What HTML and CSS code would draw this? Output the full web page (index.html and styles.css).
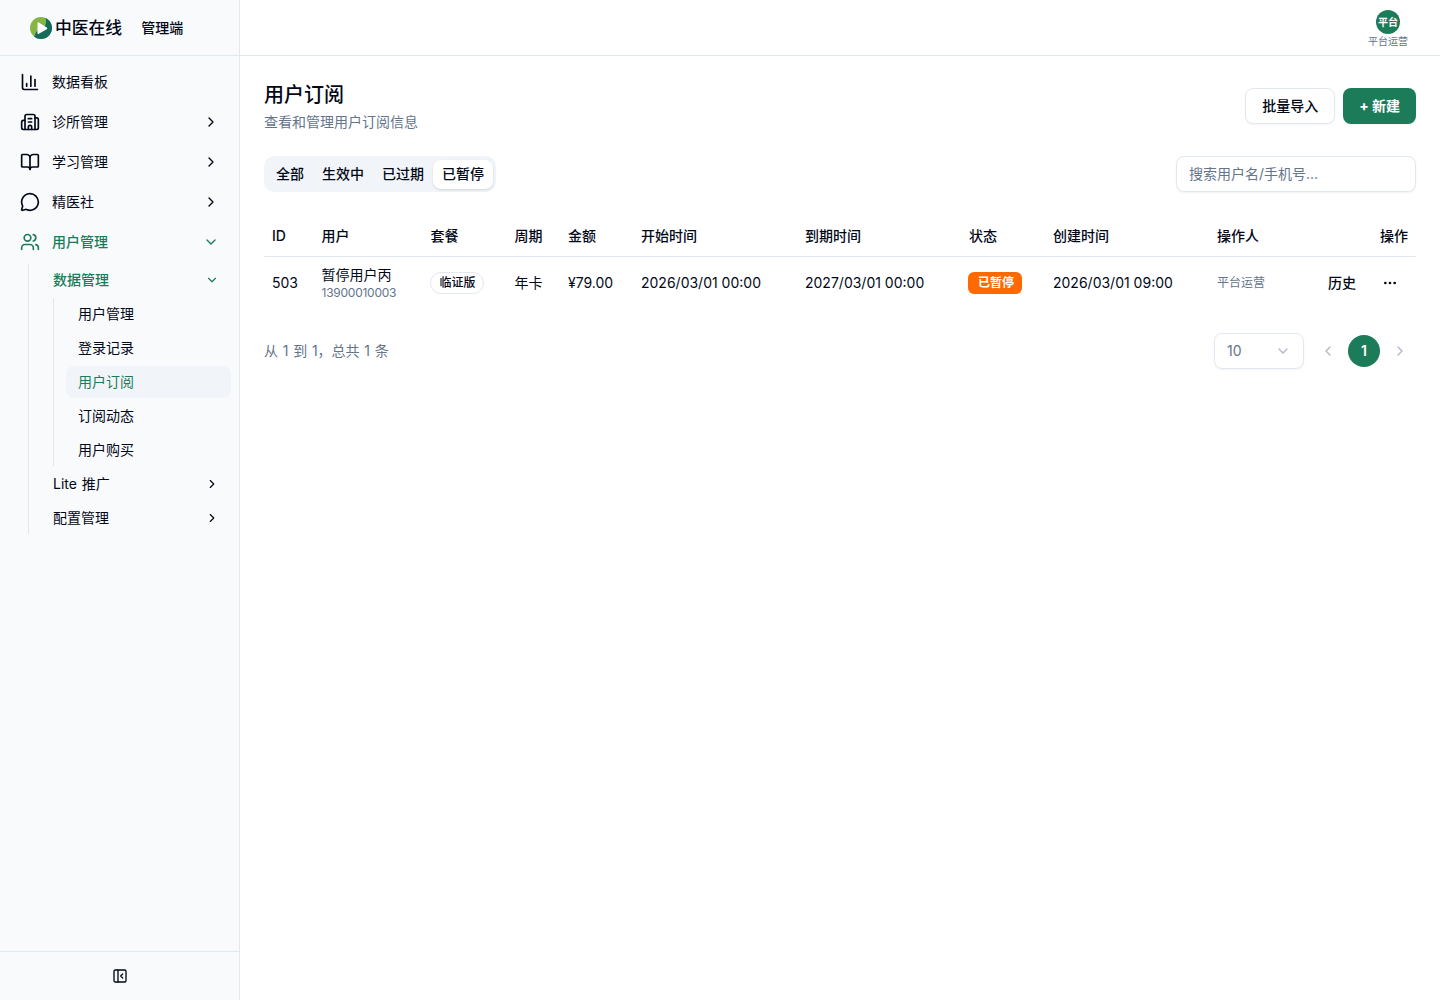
FILE: index.html
```html
<!DOCTYPE html>
<html lang="zh-CN">
<head>
  <meta charset="UTF-8">
  <title>用户订阅 - 中医在线管理端</title>
  <link rel="stylesheet" href="styles.css">
</head>
<body>
  <div class="layout">
    <aside class="sidebar">
      <div class="brand">
        <svg class="logo" viewBox="0 0 24 24">
          <circle cx="12" cy="12" r="11" fill="#86b545"/>
          <path d="M16.500 1.960A11 11 0 1 1 5 20.480Q6.500 19 7 16L16 10Q18 6 16.500 1.960Z" fill="#136b5b"/>
          <path d="M8.500 7.200v9.800q0 1.400 1.300.8l8-4.600q1.200-.8 0-1.600l-8-5Q8.500 5.900 8.500 7.200z" fill="#fff"/>
        </svg>
        <span class="brand-name">中医在线</span>
        <span class="brand-sub">管理端</span>
      </div>

      <nav class="menu">
        <a class="item">
          <svg class="icon" viewBox="0 0 24 24"><path d="M3 3v16a2 2 0 0 0 2 2h16"/><path d="M18 17V9"/><path d="M13 17V5"/><path d="M8 17v-3"/></svg>
          <span>数据看板</span>
        </a>
        <a class="item">
          <svg class="icon" viewBox="0 0 24 24"><path d="M10 12h4"/><path d="M10 8h4"/><path d="M14 21v-3a2 2 0 0 0-4 0v3"/><path d="M6 10H4a2 2 0 0 0-2 2v7a2 2 0 0 0 2 2h16a2 2 0 0 0 2-2V9a2 2 0 0 0-2-2h-2"/><path d="M6 21V5a2 2 0 0 1 2-2h8a2 2 0 0 1 2 2v16"/></svg>
          <span>诊所管理</span>
          <svg class="arrow" viewBox="0 0 24 24"><path d="m9 18 6-6-6-6"/></svg>
        </a>
        <a class="item">
          <svg class="icon" viewBox="0 0 24 24"><path d="M12 7v14"/><path d="M3 18a1 1 0 0 1-1-1V4a1 1 0 0 1 1-1h5a4 4 0 0 1 4 4 4 4 0 0 1 4-4h5a1 1 0 0 1 1 1v13a1 1 0 0 1-1 1h-6a3 3 0 0 0-3 3 3 3 0 0 0-3-3z"/></svg>
          <span>学习管理</span>
          <svg class="arrow" viewBox="0 0 24 24"><path d="m9 18 6-6-6-6"/></svg>
        </a>
        <a class="item">
          <svg class="icon" viewBox="0 0 24 24"><path d="M2.992 16.342a2 2 0 0 1 .094 1.167l-1.065 3.290a1 1 0 0 0 1.236 1.168l3.413-.998a2 2 0 0 1 1.099.092 10 10 0 1 0-4.777-4.719"/></svg>
          <span>精医社</span>
          <svg class="arrow" viewBox="0 0 24 24"><path d="m9 18 6-6-6-6"/></svg>
        </a>
        <a class="item open">
          <svg class="icon" viewBox="0 0 24 24"><path d="M16 21v-2a4 4 0 0 0-4-4H6a4 4 0 0 0-4 4v2"/><path d="M16 3.128a4 4 0 0 1 0 7.744"/><path d="M22 21v-2a4 4 0 0 0-3-3.870"/><circle cx="9" cy="7" r="4"/></svg>
          <span>用户管理</span>
          <svg class="arrow" viewBox="0 0 24 24"><path d="m6 9 6 6 6-6"/></svg>
        </a>
        <div class="submenu">
          <a class="subitem open">
            <span>数据管理</span>
            <svg class="arrow" viewBox="0 0 24 24"><path d="m6 9 6 6 6-6"/></svg>
          </a>
          <div class="leafs">
            <a class="leaf">用户管理</a>
            <a class="leaf">登录记录</a>
            <a class="leaf active">用户订阅</a>
            <a class="leaf">订阅动态</a>
            <a class="leaf">用户购买</a>
          </div>
          <a class="subitem">
            <span>Lite 推广</span>
            <svg class="arrow" viewBox="0 0 24 24"><path d="m9 18 6-6-6-6"/></svg>
          </a>
          <a class="subitem">
            <span>配置管理</span>
            <svg class="arrow" viewBox="0 0 24 24"><path d="m9 18 6-6-6-6"/></svg>
          </a>
        </div>
      </nav>

      <div class="sidebar-footer">
        <svg class="collapse" viewBox="0 0 24 24"><rect width="18" height="18" x="3" y="3" rx="2"/><path d="M9 3v18"/><path d="m16 15-3-3 3-3"/></svg>
      </div>
    </aside>

    <div class="main">
      <header class="topbar">
        <div class="account">
          <span class="avatar">平台</span>
          <span class="account-name">平台运营</span>
        </div>
      </header>

      <main class="content">
        <div class="page-head">
          <div>
            <h1>用户订阅</h1>
            <p class="desc">查看和管理用户订阅信息</p>
          </div>
          <div class="actions">
            <button class="btn">批量导入</button>
            <button class="btn btn-primary">+ 新建</button>
          </div>
        </div>

        <div class="filters">
          <div class="tabs">
            <button class="tab">全部</button>
            <button class="tab">生效中</button>
            <button class="tab">已过期</button>
            <button class="tab active">已暂停</button>
          </div>
          <input class="search" type="text" placeholder="搜索用户名/手机号...">
        </div>

        <table class="table">
          <colgroup>
            <col class="c-id"><col class="c-user"><col class="c-plan"><col class="c-cycle"><col class="c-price">
            <col class="c-time"><col class="c-time"><col class="c-status"><col class="c-time"><col class="c-by"><col>
          </colgroup>
          <thead>
            <tr>
              <th>ID</th>
              <th>用户</th>
              <th>套餐</th>
              <th>周期</th>
              <th>金额</th>
              <th>开始时间</th>
              <th>到期时间</th>
              <th>状态</th>
              <th>创建时间</th>
              <th>操作人</th>
              <th class="right">操作</th>
            </tr>
          </thead>
          <tbody>
            <tr>
              <td>503</td>
              <td>
                <div class="user-name">暂停用户丙</div>
                <div class="user-phone">13900010003</div>
              </td>
              <td><span class="badge">临证版</span></td>
              <td>年卡</td>
              <td>¥79.00</td>
              <td>2026/03/01 00:00</td>
              <td>2027/03/01 00:00</td>
              <td><span class="badge badge-paused">已暂停</span></td>
              <td>2026/03/01 09:00</td>
              <td class="operator">平台运营</td>
              <td>
                <div class="row-actions">
                  <span class="history">历史</span>
                  <svg class="more" viewBox="0 0 24 24"><circle cx="12" cy="12" r="1"/><circle cx="19" cy="12" r="1"/><circle cx="5" cy="12" r="1"/></svg>
                </div>
              </td>
            </tr>
          </tbody>
        </table>

        <div class="table-foot">
          <span class="total">从 1 到 1，总共 1 条</span>
          <div class="pager">
            <div class="page-size">
              <span>10</span>
              <svg class="arrow" viewBox="0 0 24 24"><path d="m6 9 6 6 6-6"/></svg>
            </div>
            <div class="pages">
              <span class="page disabled"><svg class="arrow" viewBox="0 0 24 24"><path d="m15 18-6-6 6-6"/></svg></span>
              <span class="page current">1</span>
              <span class="page disabled"><svg class="arrow" viewBox="0 0 24 24"><path d="m9 18 6-6-6-6"/></svg></span>
            </div>
          </div>
        </div>
      </main>
    </div>
  </div>
</body>
</html>
```
FILE: styles.css
```css
* {
  box-sizing: border-box;
}
body {
  margin: 0;
  font-family: Inter, "Noto Sans CJK SC", sans-serif;
  font-size: 14px;
  line-height: 20px;
  color: #020817;
  background: #fff;
}
button, input {
  font: inherit;
  color: inherit;
}
svg {
  flex-shrink: 0;
  fill: none;
  stroke: currentColor;
  stroke-width: 2;
  stroke-linecap: round;
  stroke-linejoin: round;
}
.layout {
  display: flex;
  height: 100vh;
}

/* sidebar */
.sidebar {
  display: flex;
  flex-direction: column;
  width: 240px;
  background: #f9fafc;
  border-right: 1px solid #e2e8f0;
}
.brand {
  display: flex;
  align-items: center;
  height: 56px;
  padding-left: 29px;
  border-bottom: 1px solid #e2e8f0;
}
.logo {
  width: 24px;
  height: 24px;
  stroke: none;
}
.brand-name {
  margin-left: 2px;
  font-size: 16.8px;
  font-weight: 500;
}
.brand-sub {
  margin-left: 19px;
  font-weight: 500;
}
.menu {
  flex: 1;
  padding: 8px;
}
.item {
  display: flex;
  align-items: center;
  gap: 12px;
  height: 36px;
  margin-bottom: 4px;
  padding: 0 12px;
}
.icon {
  width: 20px;
  height: 20px;
}
.arrow {
  width: 16px;
  height: 16px;
}
.item .arrow,
.subitem .arrow {
  margin-left: auto;
}
.open {
  color: #1c7c5a;
  font-weight: 500;
}
.submenu {
  margin-left: 20px;
  padding-left: 12px;
  border-left: 1px solid #e2e8f0;
}
.subitem {
  display: flex;
  align-items: center;
  height: 32px;
  margin-bottom: 2px;
  padding: 0 12px;
  word-spacing: 1px;
}
.subitem .arrow {
  width: 14px;
  height: 14px;
}
.leafs {
  margin: 0 0 2px 12px;
  padding-left: 12px;
  border-left: 1px solid #e2e8f0;
}
.leaf {
  display: block;
  height: 32px;
  margin-bottom: 2px;
  padding: 6px 12px;
  border-radius: 8px;
}
.leaf.active {
  color: #1c7c5a;
  background: #f1f5f9;
}
.sidebar-footer {
  display: flex;
  align-items: center;
  justify-content: center;
  height: 49px;
  border-top: 1px solid #e2e8f0;
}
.collapse {
  width: 16px;
  height: 16px;
}

/* top bar */
.main {
  flex: 1;
}
.topbar {
  display: flex;
  align-items: center;
  justify-content: flex-end;
  height: 56px;
  padding: 1px 32px 0;
  border-bottom: 1px solid #e2e8f0;
}
.account {
  display: flex;
  flex-direction: column;
  align-items: center;
  gap: 2px;
}
.avatar {
  width: 24px;
  height: 24px;
  border-radius: 50%;
  background: #1c7c5a;
  color: #fff;
  font-size: 10px;
  font-weight: 700;
  line-height: 24px;
  text-align: center;
}
.account-name {
  color: #64748b;
  font-size: 10px;
  line-height: 11px;
}

/* page */
.content {
  padding: 24px;
}
.page-head {
  display: flex;
  align-items: center;
  justify-content: space-between;
  margin-bottom: 24px;
}
h1 {
  margin: 0;
  font-size: 20px;
  font-weight: 500;
  line-height: 30px;
}
.desc {
  margin: 2px 0 0;
  color: #64748b;
}
.actions {
  display: flex;
  gap: 8px;
}
.btn {
  height: 36px;
  padding: 0 16px;
  border: 1px solid #e2e8f0;
  border-radius: 8px;
  background: #fff;
  font-weight: 500;
  box-shadow: 0 1px 2px rgba(0, 0, 0, 0.05);
}
.btn-primary {
  border: 0;
  background: #1c7c5a;
  color: #fff;
  font-weight: 700;
}
.filters {
  display: flex;
  justify-content: space-between;
  margin-bottom: 24px;
}
.tabs {
  display: flex;
  align-items: center;
  height: 36px;
  padding: 3px;
  border-radius: 10px;
  background: #f1f5f9;
}
.tab {
  height: 29px;
  padding: 0 9px;
  border: 0;
  border-radius: 8px;
  background: none;
  font-weight: 500;
}
.tab.active {
  background: #fff;
  box-shadow: 0 1px 3px rgba(0, 0, 0, 0.1), 0 1px 2px -1px rgba(0, 0, 0, 0.1);
}
.search {
  width: 240px;
  height: 36px;
  padding: 0 12px 2px;
  border: 1px solid #e2e8f0;
  border-radius: 8px;
  box-shadow: 0 1px 2px rgba(0, 0, 0, 0.05);
}
.search::placeholder {
  color: #64748b;
}

/* table */
.table {
  width: 100%;
  table-layout: fixed;
  border-collapse: collapse;
}
.c-id { width: 49.500px; }
.c-user { width: 109px; }
.c-plan { width: 84px; }
.c-cycle { width: 53.500px; }
.c-price { width: 73px; }
.c-time { width: 164px; }
.c-status { width: 84px; }
.c-by { width: 101px; }
th, td {
  padding: 8px;
  text-align: left;
  vertical-align: middle;
  white-space: nowrap;
}
th {
  height: 40px;
  padding: 0 8px;
  border-bottom: 1px solid #e2e8f0;
  font-weight: 500;
}
.right {
  text-align: right;
}
.user-phone {
  color: #64748b;
  font-size: 12px;
  line-height: 16px;
  letter-spacing: -0.25px;
}
.badge {
  display: inline-block;
  margin-left: -1px;
  padding: 2px 7px 2px 9px;
  border: 1px solid #e2e8f0;
  border-radius: 11px;
  font-size: 12px;
  font-weight: 500;
  line-height: 16px;
}
.badge-paused {
  padding: 3px 8px 3px 10px;
  border: 0;
  border-radius: 6px;
  background: #ff6900;
  color: #fff;
  font-weight: 700;
}
.operator {
  color: #64748b;
  font-size: 12px;
}
.row-actions {
  display: flex;
  align-items: center;
  justify-content: flex-end;
  gap: 26px;
  padding-right: 10px;
}
.history {
  font-weight: 500;
}
.more {
  width: 16px;
  height: 16px;
}
.table-foot {
  display: flex;
  align-items: center;
  justify-content: space-between;
  margin-top: 24px;
  color: #64748b;
}
.total {
  word-spacing: 0.8px;
}
.pager,
.pages {
  display: flex;
  align-items: center;
}
.pager {
  gap: 8px;
}
.pages {
  gap: 4px;
}
.page-size {
  display: flex;
  align-items: center;
  justify-content: space-between;
  width: 90px;
  height: 36px;
  padding: 0 12px;
  border: 1px solid #e2e8f0;
  border-radius: 8px;
  box-shadow: 0 1px 2px rgba(0, 0, 0, 0.05);
}
.page-size .arrow {
  opacity: 0.5;
}
.page {
  display: flex;
  align-items: center;
  justify-content: center;
  width: 32px;
  height: 32px;
  border-radius: 50%;
}
.page.current {
  background: #1c7c5a;
  color: #fff;
  font-weight: 600;
}
.page.disabled {
  opacity: 0.5;
}
```
